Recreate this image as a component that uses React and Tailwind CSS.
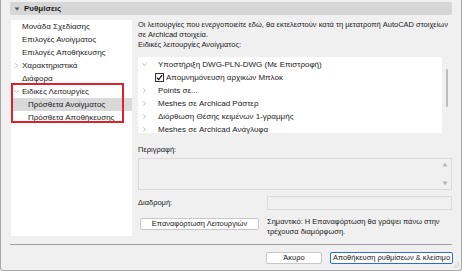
import { ChevronDown, ChevronRight } from 'lucide-react';

const font = { fontFamily: '"Liberation Sans", Arial, sans-serif' };

function TreeRow({ label, level = 0, arrow = null, selected = false }) {
  return (
    <div className={`h-[13px] flex items-center ${selected ? 'bg-[#d9d9d9]' : ''}`}>
      <div className={`${level ? 'w-[16px]' : 'w-[10px]'} shrink-0 flex justify-end pr-[1px]`}>
        {arrow === 'down' && <ChevronDown size={7} strokeWidth={2} className="text-[#8a8a8a]" />}
        {arrow === 'right' && <ChevronRight size={7} strokeWidth={2} className="text-[#8a8a8a]" />}
      </div>
      <span className="pl-[1px] text-[8px] text-[#1a1a1a] whitespace-nowrap">{label}</span>
    </div>
  );
}

function ListRow({ label, arrow = null, check = false }) {
  return (
    <div className="h-[13px] flex items-center">
      <div className="w-[20px] shrink-0 flex justify-start pl-[3px]">
        {arrow === 'down' && <ChevronDown size={7} strokeWidth={2} className="text-[#8a8a8a]" />}
        {arrow === 'right' && <ChevronRight size={7} strokeWidth={2} className="text-[#8a8a8a]" />}
      </div>
      {check && (
        <div className="ml-[-3px] mr-[2px] w-[9px] h-[9px] border border-[#333] bg-white flex items-center justify-center">
          <svg width="7" height="7" viewBox="0 0 8 8">
            <path d="M1 4.2 L3.1 6.3 L7 1.2" fill="none" stroke="#111" strokeWidth="1.4" />
          </svg>
        </div>
      )}
      <span className="text-[8px] text-[#1a1a1a] whitespace-nowrap">{label}</span>
    </div>
  );
}

export default function App() {
  return (
    <div style={font} className="w-[462px] h-[271px] bg-[#f0f0f0] border-x border-b border-[#a8a8a8] rounded-b-[3px] flex flex-col relative overflow-hidden">
      {/* header */}
      <div className="mt-[2px] ml-[9px] mr-[9px] h-[13px] bg-[#d6d6d6] rounded-[2px] flex items-center pl-[4px]">
        <svg width="6" height="6" viewBox="0 0 6 6" className="mr-[4px]"><path d="M0.5 1.5 L5.5 1.5 L3 4.5 Z" fill="#555" /></svg>
        <span className="text-[8px] font-bold text-[#1a1a1a]">Ρυθμίσεις</span>
      </div>

      <div className="flex mt-[5px] ml-[10px] mr-[9px]">
        {/* tree */}
        <div className="w-[121px] h-[216px] bg-white relative shrink-0">
          <TreeRow label="Μονάδα Σχεδίασης" />
          <TreeRow label="Επιλογές Ανοίγματος" />
          <TreeRow label="Επιλογές Αποθήκευσης" />
          <TreeRow label="Χαρακτηριστικά" arrow="right" />
          <TreeRow label="Διάφορα" />
          <TreeRow label="Ειδικές Λειτουργίες" arrow="down" />
          <TreeRow label="Πρόσθετα Ανοίγματος" level={1} selected />
          <TreeRow label="Πρόσθετα Αποθήκευσης" level={1} />
          <div className="absolute left-0 top-[63px] w-[113px] h-[40px] border-2 border-[#e3202a]" />
        </div>

        {/* right column */}
        <div className="flex-1 ml-[6px] flex flex-col">
          <div className="text-[7.5px] leading-[10px] text-[#1a1a1a] whitespace-nowrap">
            <div>Οι λειτουργίες που ενεργοποιείτε εδώ, θα εκτελεστούν κατά τη μετατροπή AutoCAD στοιχείων</div>
            <div>σε Archicad στοιχεία.</div>
            <div>Ειδικές λειτουργίες Ανοίγματος:</div>
          </div>

          <div className="mt-[7px] flex">
            <div className="w-[304px] h-[76px] bg-white pt-[1px]">
              <ListRow label="Υποστήριξη DWG-PLN-DWG (Με Επιστροφή)" arrow="down" />
              <ListRow label="Απομνημόνευση αρχικών Μπλοκ" check />
              <ListRow label="Points σε..." arrow="right" />
              <ListRow label="Meshes σε Archicad Ράστερ" arrow="right" />
              <ListRow label="Διόρθωση Θέσης κειμένων 1-γραμμής" arrow="right" />
              <ListRow label="Meshes σε Archicad Ανάγλυφα" arrow="right" />
            </div>
            <div className="ml-[4px] mt-[12px] w-[2px] h-[38px] bg-[#bdbdbd] rounded-full" />
          </div>

          <div className="mt-[12px] text-[7.5px] leading-[10px] text-[#1a1a1a]">Περιγραφή:</div>
          <div className="mt-[3px] h-[32px] border border-[#dadada] bg-[#f0f0f0] flex justify-end">
            <div className="w-[12px] flex flex-col items-center justify-between py-[3px]">
              <svg width="6" height="5" viewBox="0 0 6 5"><path d="M0.5 4.5 L5.5 4.5 L3 0.5 Z" fill="#b5b5b5" /></svg>
              <svg width="6" height="5" viewBox="0 0 6 5"><path d="M0.5 0.5 L5.5 0.5 L3 4.5 Z" fill="#b5b5b5" /></svg>
            </div>
          </div>

          <div className="mt-[6px] flex items-center h-[14px]">
            <div className="w-[129px] text-[7.5px] text-[#1a1a1a]">Διαδρομή:</div>
            <div className="flex-1 h-[14px] border border-[#dadada] bg-[#f0f0f0]" />
          </div>

          <div className="mt-[8px] flex items-start">
            <div className="ml-[2px] w-[119px] h-[12px] border border-[#c8c8c8] bg-white rounded-[2px] flex items-center justify-center text-[7.5px] text-[#1a1a1a] whitespace-nowrap">
              Επαναφόρτωση Λειτουργιών
            </div>
            <div className="ml-[8px] mt-[-1px] text-[7.5px] leading-[10px] text-[#1a1a1a] whitespace-nowrap">
              <div>Σημαντικό: Η Επαναφόρτωση θα γράψει πάνω στην</div>
              <div>τρέχουσα διαμόρφωση.</div>
            </div>
          </div>
        </div>
      </div>

      {/* separator */}
      <div className="mt-[7px] ml-[9px] mr-[9px] h-px bg-[#a0a0a0]" />

      {/* bottom buttons */}
      <div className="mt-[7px] flex justify-end mr-[8px] gap-[8px]">
        <div className="w-[56px] h-[12px] border border-[#c8c8c8] bg-white rounded-[2px] flex items-center justify-center text-[7.5px] text-[#1a1a1a]">
          Άκυρο
        </div>
        <div className="w-[123px] h-[12px] border border-[#2a6fd6] bg-white rounded-[2px] flex items-center justify-center text-[7.5px] text-[#1a1a1a] whitespace-nowrap">
          Αποθήκευση ρυθμίσεων &amp; κλείσιμο
        </div>
      </div>

      {/* resize grip */}
      <svg width="6" height="6" viewBox="0 0 6 6" className="absolute right-[2px] bottom-[2px]">
        <circle cx="5" cy="1" r="0.6" fill="#b0b0b0" />
        <circle cx="5" cy="3" r="0.6" fill="#b0b0b0" />
        <circle cx="3" cy="3" r="0.6" fill="#b0b0b0" />
        <circle cx="5" cy="5" r="0.6" fill="#b0b0b0" />
        <circle cx="3" cy="5" r="0.6" fill="#b0b0b0" />
        <circle cx="1" cy="5" r="0.6" fill="#b0b0b0" />
      </svg>
    </div>
  );
}
